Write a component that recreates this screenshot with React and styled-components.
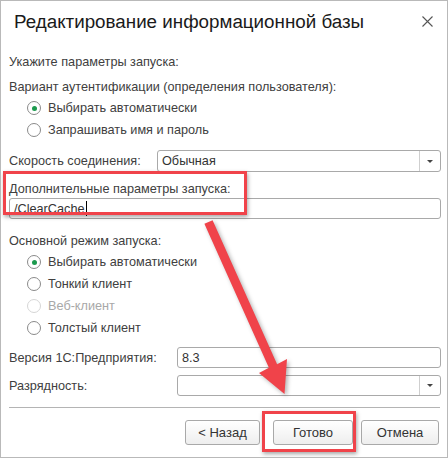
import React from 'react';
import styled, { createGlobalStyle } from 'styled-components';

const RED = '#f0434a';

const GlobalStyle = createGlobalStyle`
  html, body {
    margin: 0;
    padding: 0;
    background: #ffffff;
  }

  body {
    font-family: "Liberation Sans", Arial, sans-serif;
  }
`;

const Window = styled.div`
  position: relative;
  width: 448px;
  height: 458px;
  box-sizing: border-box;
  border: 1px solid #b9b9b9;
  background: #ffffff;
  display: flex;
  flex-direction: column;
  overflow: hidden;
`;

const Header = styled.div`
  height: 43px;
  display: flex;
  align-items: center;
  justify-content: space-between;
  padding: 0 12px 2px 13px;
  box-sizing: border-box;
`;

const Title = styled.h1`
  margin: 0;
  font-size: 18.8px;
  font-weight: normal;
  color: #1a1a1a;
`;

const CloseButton = styled.button`
  width: 16px;
  height: 16px;
  padding: 0;
  border: 0;
  background: none;
  display: flex;
  align-items: center;
  justify-content: center;
`;

const Body = styled.div`
  display: flex;
  flex-direction: column;
  padding: 0 6px 0 8px;
`;

const Text = styled.div`
  height: ${({ h }) => h || 20}px;
  margin-top: ${({ mt }) => mt || 0}px;
  display: flex;
  align-items: center;
  font-size: 12.7px;
  color: #404040;
`;

const RadioRow = styled.label`
  height: 22px;
  display: flex;
  align-items: center;
  gap: 7px;
  padding-left: 18px;
  font-size: 12.7px;
  color: ${({ disabled }) => (disabled ? '#a8a8a8' : '#404040')};
`;

const RadioCircle = styled.span`
  width: 14px;
  height: 14px;
  box-sizing: border-box;
  border-radius: 50%;
  border: 1px solid ${({ disabled }) => (disabled ? '#d6d6d6' : '#8a8a8a')};
  background: #ffffff;
  display: flex;
  align-items: center;
  justify-content: center;

  &::after {
    content: '';
    width: 5px;
    height: 5px;
    border-radius: 50%;
    background: ${({ checked }) => (checked ? '#1c9a4e' : 'transparent')};
  }
`;

const FieldRow = styled.div`
  display: grid;
  grid-template-columns: ${({ labelWidth }) => labelWidth}px 1fr;
  align-items: center;
  margin-top: ${({ mt }) => mt || 0}px;
`;

const FieldLabel = styled.span`
  font-size: 12.7px;
  color: #404040;
`;

const Field = styled.div`
  height: ${({ h }) => h || 21}px;
  box-sizing: border-box;
  border: 1px solid #a9a9a9;
  border-radius: 3px;
  background: #ffffff;
  display: flex;
  align-items: stretch;
  font-size: 12.7px;
  color: #333333;
`;

const FieldValue = styled.span`
  flex: 1;
  display: flex;
  align-items: center;
  padding-left: 4px;
`;

const Caret = styled.span`
  display: inline-block;
  width: 1px;
  height: 15px;
  margin-left: 1px;
  background: #000000;
`;

const DropButton = styled.span`
  width: 20px;
  border-left: 1px solid #cfcfcf;
  display: flex;
  align-items: center;
  justify-content: center;

  &::after {
    content: '';
    border-left: 3px solid transparent;
    border-right: 3px solid transparent;
    border-top: 3px solid #444444;
  }
`;

const Highlighted = styled.div`
  position: relative;

  &::after {
    content: '';
    position: absolute;
    left: ${({ l }) => l}px;
    top: ${({ t }) => t}px;
    width: ${({ w }) => w}px;
    height: ${({ hh }) => hh}px;
    box-sizing: border-box;
    border: 3px solid ${RED};
    box-shadow: 1px 2px 4px rgba(0, 0, 0, 0.35);
    pointer-events: none;
  }
`;

const ExtraGroup = styled.div`
  margin-top: 8px;
  display: flex;
  flex-direction: column;
`;

const Separator = styled.hr`
  margin: 11px 1px 0 0;
  border: 0;
  height: 1px;
  background: #b4b4b4;
`;

const Footer = styled.div`
  display: flex;
  justify-content: flex-end;
  align-items: center;
  gap: 8px;
  margin-top: 12px;
  padding-right: 2px;
`;

const Button = styled.button`
  width: ${({ w }) => w}px;
  height: 25px;
  box-sizing: border-box;
  border: 1px solid #a9a9a9;
  border-radius: 3px;
  background: linear-gradient(#ffffff, #eeeeee);
  font-family: inherit;
  font-size: 13px;
  color: #333333;
  margin-left: ${({ ml }) => ml || 0}px;
  padding: 0;
`;

const ArrowLayer = styled.svg`
  position: absolute;
  left: 0;
  top: 0;
  width: 448px;
  height: 458px;
  pointer-events: none;
  filter: drop-shadow(2px 2px 2px rgba(0, 0, 0, 0.3));
`;

const Radio = ({ checked, disabled, children }) => (
  <RadioRow disabled={disabled}>
    <RadioCircle checked={checked} disabled={disabled} />
    {children}
  </RadioRow>
);

export default function App() {
  return (
    <>
      <GlobalStyle />
      <Window>
        <Header>
          <Title>Редактирование информационной базы</Title>
          <CloseButton aria-label="close">
            <svg width="11" height="11" viewBox="0 0 11 11">
              <path d="M0.5 0.5 L10.5 10.5 M10.5 0.5 L0.5 10.5" stroke="#555" strokeWidth="1.1" />
            </svg>
          </CloseButton>
        </Header>

        <Body>
          <Text mt={8}>Укажите параметры запуска:</Text>
          <Text mt={5}>Вариант аутентификации (определения пользователя):</Text>
          <Radio checked>Выбирать автоматически</Radio>
          <Radio>Запрашивать имя и пароль</Radio>

          <FieldRow labelWidth={148} mt={9}>
            <FieldLabel>Скорость соединения:</FieldLabel>
            <Field h={22}>
              <FieldValue>Обычная</FieldValue>
              <DropButton />
            </Field>
          </FieldRow>

          <Highlighted l={-6} t={-1} w={244} hh={44}>
            <ExtraGroup>
              <Text h={18}>Дополнительные параметры запуска:</Text>
              <Field>
                <FieldValue>
                  /ClearCache
                  <Caret />
                </FieldValue>
              </Field>
            </ExtraGroup>
          </Highlighted>

          <Text mt={12}>Основной режим запуска:</Text>
          <Radio checked>Выбирать автоматически</Radio>
          <Radio>Тонкий клиент</Radio>
          <Radio disabled>Веб-клиент</Radio>
          <Radio>Толстый клиент</Radio>

          <FieldRow labelWidth={168} mt={8}>
            <FieldLabel>Версия 1С:Предприятия:</FieldLabel>
            <Field>
              <FieldValue>8.3</FieldValue>
            </Field>
          </FieldRow>

          <FieldRow labelWidth={168} mt={7}>
            <FieldLabel>Разрядность:</FieldLabel>
            <Field>
              <FieldValue />
              <DropButton />
            </Field>
          </FieldRow>

          <Separator />

          <Footer>
            <Button w={75}>&lt; Назад</Button>
            <Highlighted l={-6} t={-9} w={94} hh={41}>
              <Button w={80} ml={5}>Готово</Button>
            </Highlighted>
            <Button w={78}>Отмена</Button>
          </Footer>
        </Body>

        <ArrowLayer viewBox="0 0 448 458">
          <polygon
            points="203.4,222.8 211.6,219.2 276.1,363.2 286,358 283.5,393 258,372 267.9,366.8"
            fill={RED}
          />
        </ArrowLayer>
      </Window>
    </>
  );
}
